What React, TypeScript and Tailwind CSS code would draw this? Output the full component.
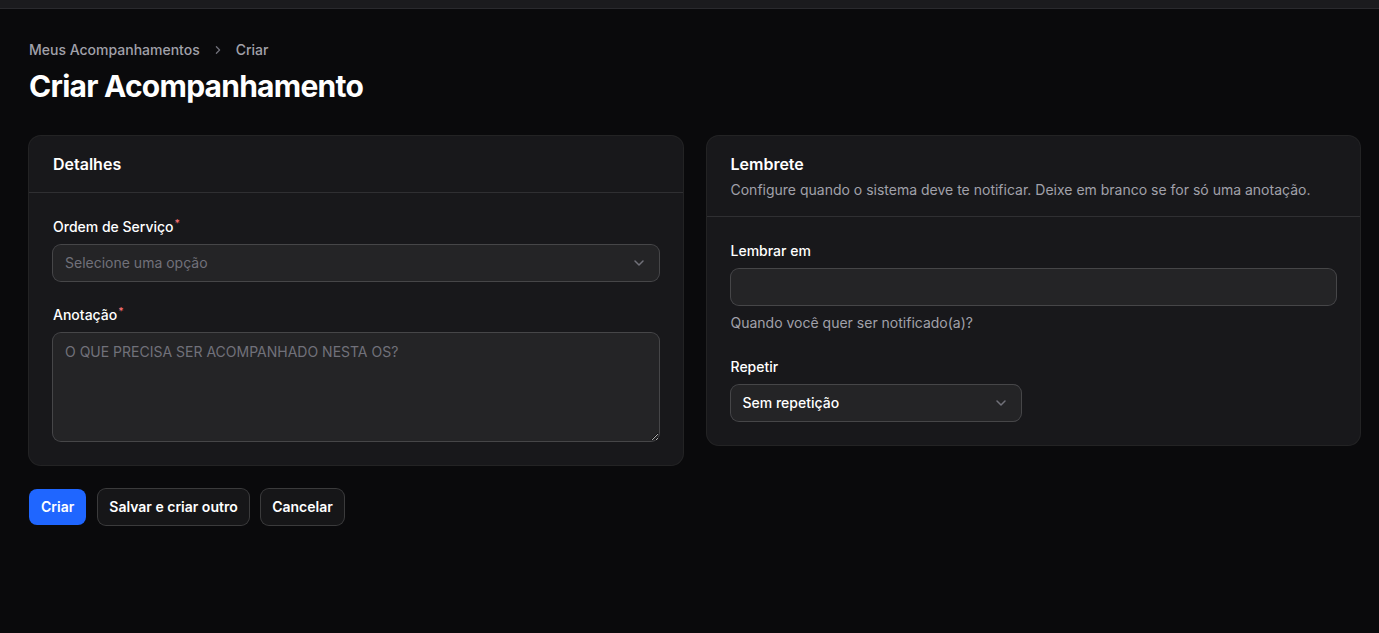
import React from "react";

const Chevron = () => (
  <svg viewBox="0 0 20 20" className="h-5 w-5 text-[#71717a]" fill="none" stroke="currentColor" strokeWidth={1.5} strokeLinecap="round" strokeLinejoin="round">
    <path d="M6 8l4 4 4-4" />
  </svg>
);

const Req = () => <sup className="ml-[1px] text-[#f87171] font-medium">*</sup>;

export default function App() {
  return (
    <div className="min-h-[633px] bg-[#0a0a0c] text-white" style={{ fontFamily: "Inter, 'Noto Sans', sans-serif" }}>
      <div className="h-[9px] border-b border-[#2a2a2e] bg-[#1b1b1e]" />
      <div className="px-[29px] pt-[31px] pb-10" style={{ width: 1390 }}>
        <nav className="flex items-center gap-x-2 text-sm leading-5 font-medium text-[#a1a1aa]">
          <span>Meus Acompanhamentos</span>
          <svg viewBox="0 0 20 20" className="mx-[2px] h-4 w-4 text-[#71717a]" fill="none" stroke="currentColor" strokeWidth={1.6} strokeLinecap="round" strokeLinejoin="round">
            <path d="M8 6l4 4-4 4" />
          </svg>
          <span>Criar</span>
        </nav>
        <h1 className="mt-2 text-[30px] leading-9 font-bold tracking-tight text-white">Criar Acompanhamento</h1>

        <div className="mt-8 grid grid-cols-2 gap-6 items-start" style={{ width: 1331 }}>
          <section className="rounded-xl bg-[#18181b] ring-1 ring-white/10">
            <header className="px-6 py-4 border-b border-white/10">
              <h3 className="text-base leading-6 font-semibold">Detalhes</h3>
            </header>
            <div className="p-6 flex flex-col gap-6">
              <div className="flex flex-col gap-2">
                <label className="text-sm leading-5 font-medium">Ordem de Serviço<Req /></label>
                <div className="flex h-9 items-center justify-between rounded-lg bg-white/5 ring-1 ring-white/20 pl-3 pr-[10px]">
                  <span className="text-sm text-[#71717a]">Selecione uma opção</span>
                  <Chevron />
                </div>
              </div>
              <div className="flex flex-col gap-2">
                <label className="text-sm leading-5 font-medium">Anotação<Req /></label>
                <textarea
                  className="block h-[108px] w-full rounded-lg bg-white/5 ring-1 ring-white/20 px-3 py-[7px] text-sm leading-6 text-white placeholder:text-[#71717a] outline-none"
                  placeholder="O QUE PRECISA SER ACOMPANHADO NESTA OS?"
                />
              </div>
            </div>
          </section>

          <section className="rounded-xl bg-[#18181b] ring-1 ring-white/10">
            <header className="px-6 py-4 border-b border-white/10">
              <h3 className="text-base leading-6 font-semibold">Lembrete</h3>
              <p className="mt-1 text-sm leading-5 text-[#a1a1aa]">Configure quando o sistema deve te notificar. Deixe em branco se for só uma anotação.</p>
            </header>
            <div className="p-6 flex flex-col gap-6">
              <div className="flex flex-col gap-2">
                <label className="text-sm leading-5 font-medium">Lembrar em</label>
                <div className="h-9 rounded-lg bg-white/5 ring-1 ring-white/20" />
                <p className="text-sm leading-5 text-[#a1a1aa]">Quando você quer ser notificado(a)?</p>
              </div>
              <div className="flex flex-col gap-2">
                <label className="text-sm leading-5 font-medium">Repetir</label>
                <div className="flex h-9 w-[290px] items-center justify-between rounded-lg bg-white/5 ring-1 ring-white/20 pl-3 pr-[10px]">
                  <span className="text-sm font-medium text-white">Sem repetição</span>
                  <Chevron />
                </div>
              </div>
            </div>
          </section>
        </div>

        <div className="mt-6 flex gap-3">
          <button className="h-9 rounded-lg bg-[#1f66ff] px-3 text-sm font-semibold text-white">Criar</button>
          <button className="h-9 rounded-lg bg-white/5 ring-1 ring-white/20 px-[11px] text-sm font-semibold text-white">Salvar e criar outro</button>
          <button className="h-9 rounded-lg bg-white/5 ring-1 ring-white/20 px-[11.5px] text-sm font-semibold text-white">Cancelar</button>
        </div>
      </div>
    </div>
  );
}
